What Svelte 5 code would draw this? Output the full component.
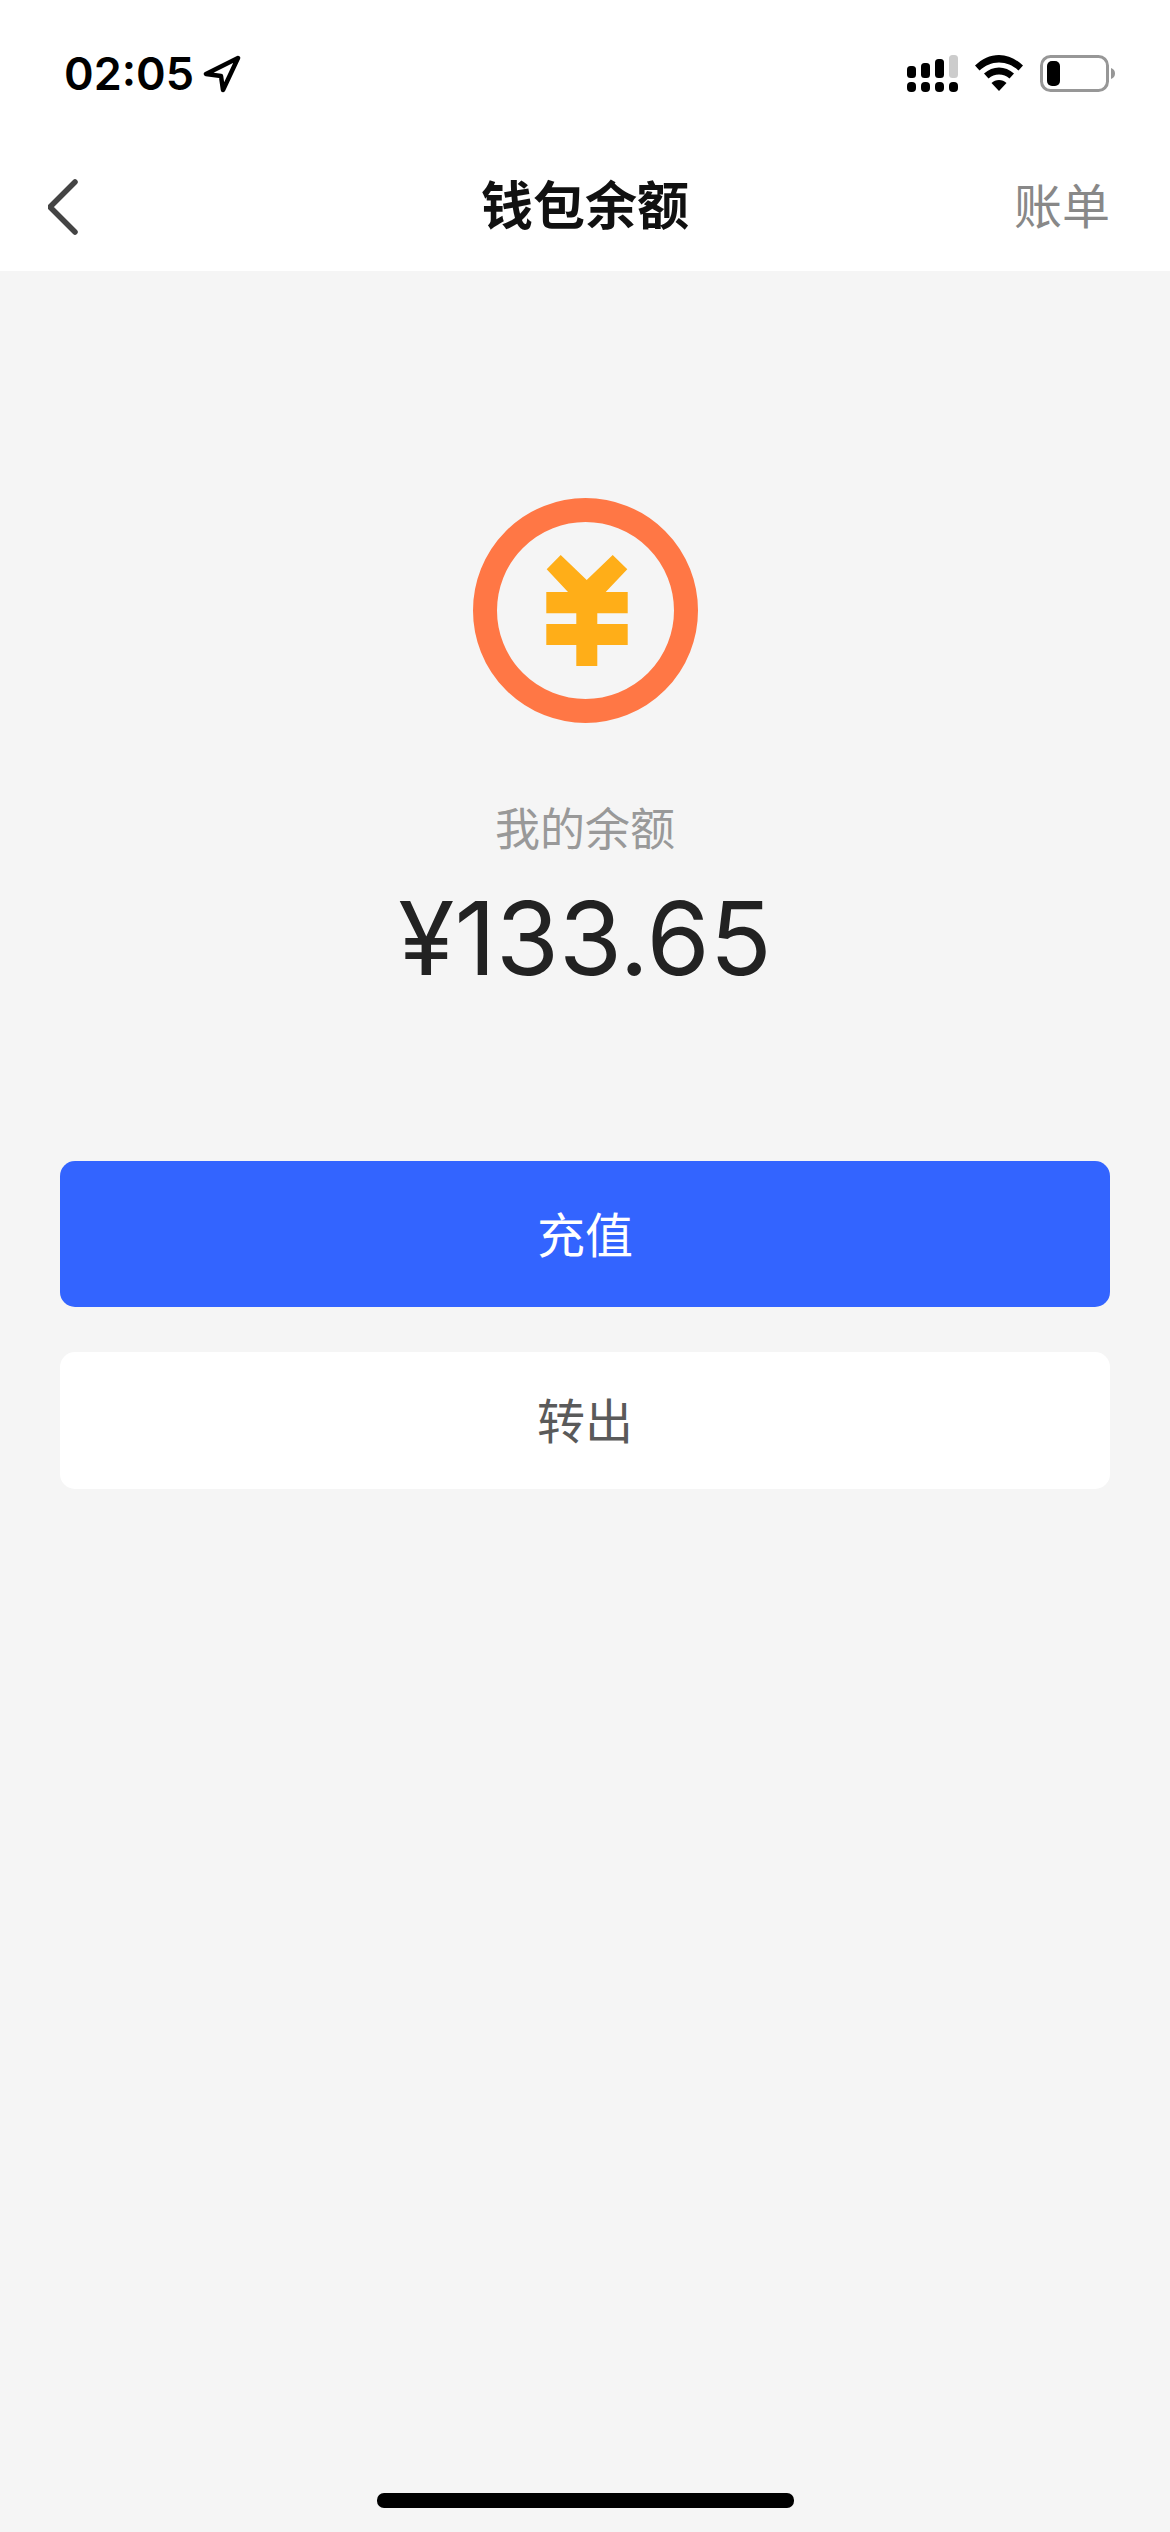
<script>
    let balance = "133.65";
</script>

<main class="page">
    <header class="top">
        <div class="status">
            <div class="time">
                <span>02:05</span>
                <svg class="arrow" width="38" height="38" viewBox="0 0 38 38">
                    <path d="M35 3 L3 19 L18 21 L20 35 Z" fill="none" stroke="#000" stroke-width="4.5" stroke-linejoin="round"/>
                </svg>
            </div>
            <div class="status-icons">
                <svg width="51" height="38" viewBox="0 0 51 38">
                    <rect x="0" y="11" width="9" height="12" rx="3.5"/>
                    <rect x="14" y="8" width="9" height="15" rx="3.5"/>
                    <rect x="28" y="4" width="9" height="19" rx="3.5"/>
                    <rect x="42" y="0" width="9" height="23" rx="3.5" fill="#ccc"/>
                    <rect x="0" y="27" width="9" height="10" rx="4"/>
                    <rect x="14" y="27" width="9" height="10" rx="4"/>
                    <rect x="28" y="27" width="9" height="10" rx="4"/>
                    <rect x="42" y="27" width="9" height="10" rx="4"/>
                </svg>
                <svg class="wifi" width="48" height="36" viewBox="0 0 48 36">
                    <path d="M24 0 C33 0 41 4 48 10.500 L43.500 15.500 C38 10.500 31.500 7.500 24 7.500 C16.500 7.500 10 10.500 4.500 15.500 L0 10.500 C7 4 15 0 24 0 Z"/>
                    <path d="M24 12.500 C29.500 12.500 34.500 14.500 39 18.500 L34.500 23.500 C31.500 21 28 19.500 24 19.500 C20 19.500 16.500 21 13.500 23.500 L9 18.500 C13.500 14.500 18.500 12.500 24 12.500 Z"/>
                    <path d="M24 25 C26.800 25 29.500 26 31.500 28 L24 36 L16.500 28 C18.500 26 21.200 25 24 25 Z"/>
                </svg>
                <svg class="battery" width="76" height="38" viewBox="0 0 76 38">
                    <rect x="1.500" y="1.500" width="66" height="34" rx="9" fill="none" stroke="#979797" stroke-width="3"/>
                    <rect x="7" y="6" width="13" height="25" rx="5"/>
                    <path d="M71 13 C74 14 75 16 75 18.500 C75 21 74 23 71 24 Z" fill="#979797"/>
                </svg>
            </div>
        </div>
        <nav class="bar">
            <svg class="back" width="30" height="60" viewBox="0 0 30 60">
                <path d="M27 5 L2 30 L27 55" fill="none" stroke="#444" stroke-width="5.500" stroke-linecap="round" stroke-linejoin="round"/>
            </svg>
            <h1>钱包余额</h1>
            <span class="bill">账单</span>
        </nav>
    </header>

    <section class="hero">
        <svg class="coin" width="225" height="225" viewBox="0 0 225 225">
            <circle cx="112.500" cy="112.500" r="100.500" fill="none" stroke="#ff7745" stroke-width="24"/>
            <path fill="#ffae18" d="M73.700 71.300 L87.700 57 L113.700 82 L139.700 57 L154.300 71.300 L132.700 94 L154.700 94 L154.700 115.300 L124.300 115.300 L124.300 126 L154.700 126 L154.700 147 L124.300 147 L124.300 168 L103.300 168 L103.300 147 L73.300 147 L73.300 126 L103.300 126 L103.300 115.300 L73.300 115.300 L73.300 94 L95 94 Z"/>
        </svg>
        <p class="label">我的余额</p>
        <p class="amount">¥{balance}</p>
    </section>

    <section class="actions">
        <button class="btn primary">充值</button>
        <button class="btn secondary">转出</button>
    </section>

    <div class="home"></div>
</main>

<style>
    :global(body){
        margin: 0;
        background-color: #f5f5f5;
    }
    .page{
        display: flex;
        flex-direction: column;
        height: 2532px;
        overflow: hidden;
        font-family: "Inter", "Noto Sans CJK SC", sans-serif;
    }
    .top{
        background-color: white;
        height: 271px;
    }
    .status{
        display: flex;
        justify-content: space-between;
        padding: 55px 54px 0 64px;
        height: 38px;
    }
    .time{
        display: flex;
        align-items: center;
        gap: 9px;
        font-size: 45px;
        font-weight: 600;
        color: black;
        line-height: 38px;
    }
    .status-icons{
        display: flex;
        align-items: flex-start;
        gap: 17px;
    }
    .bar{
        display: grid;
        grid-template-columns: 1fr auto 1fr;
        align-items: center;
        margin-top: 84px;
        padding: 0 60px;
        height: 60px;
    }
    .back{
        margin-left: -12px;
    }
    h1{
        margin: 0;
        font-size: 52px;
        line-height: 60px;
        font-weight: 700;
        color: #111;
    }
    .bill{
        justify-self: end;
        font-size: 48px;
        line-height: 60px;
        color: #888;
    }
    .hero{
        display: flex;
        flex-direction: column;
        align-items: center;
        padding-top: 227px;
    }
    .label{
        margin: 77px 0 0 0;
        font-size: 45px;
        line-height: 60px;
        color: #999;
    }
    .amount{
        margin: 18px 0 0 0;
        font-size: 102px;
        line-height: 120px;
        color: #222;
    }
    .actions{
        display: flex;
        flex-direction: column;
        gap: 45px;
        padding: 0 60px;
        margin-top: 163px;
    }
    .btn{
        border: none;
        border-radius: 15px;
        padding: 0 0 5px 0;
        font-family: inherit;
        font-size: 48px;
    }
    .primary{
        height: 146px;
        background-color: #3364ff;
        color: white;
    }
    .secondary{
        height: 137px;
        background-color: white;
        color: #5a5a5a;
    }
    .home{
        width: 417px;
        height: 15px;
        border-radius: 7px;
        background-color: black;
        margin: auto auto 24px auto;
    }
</style>
